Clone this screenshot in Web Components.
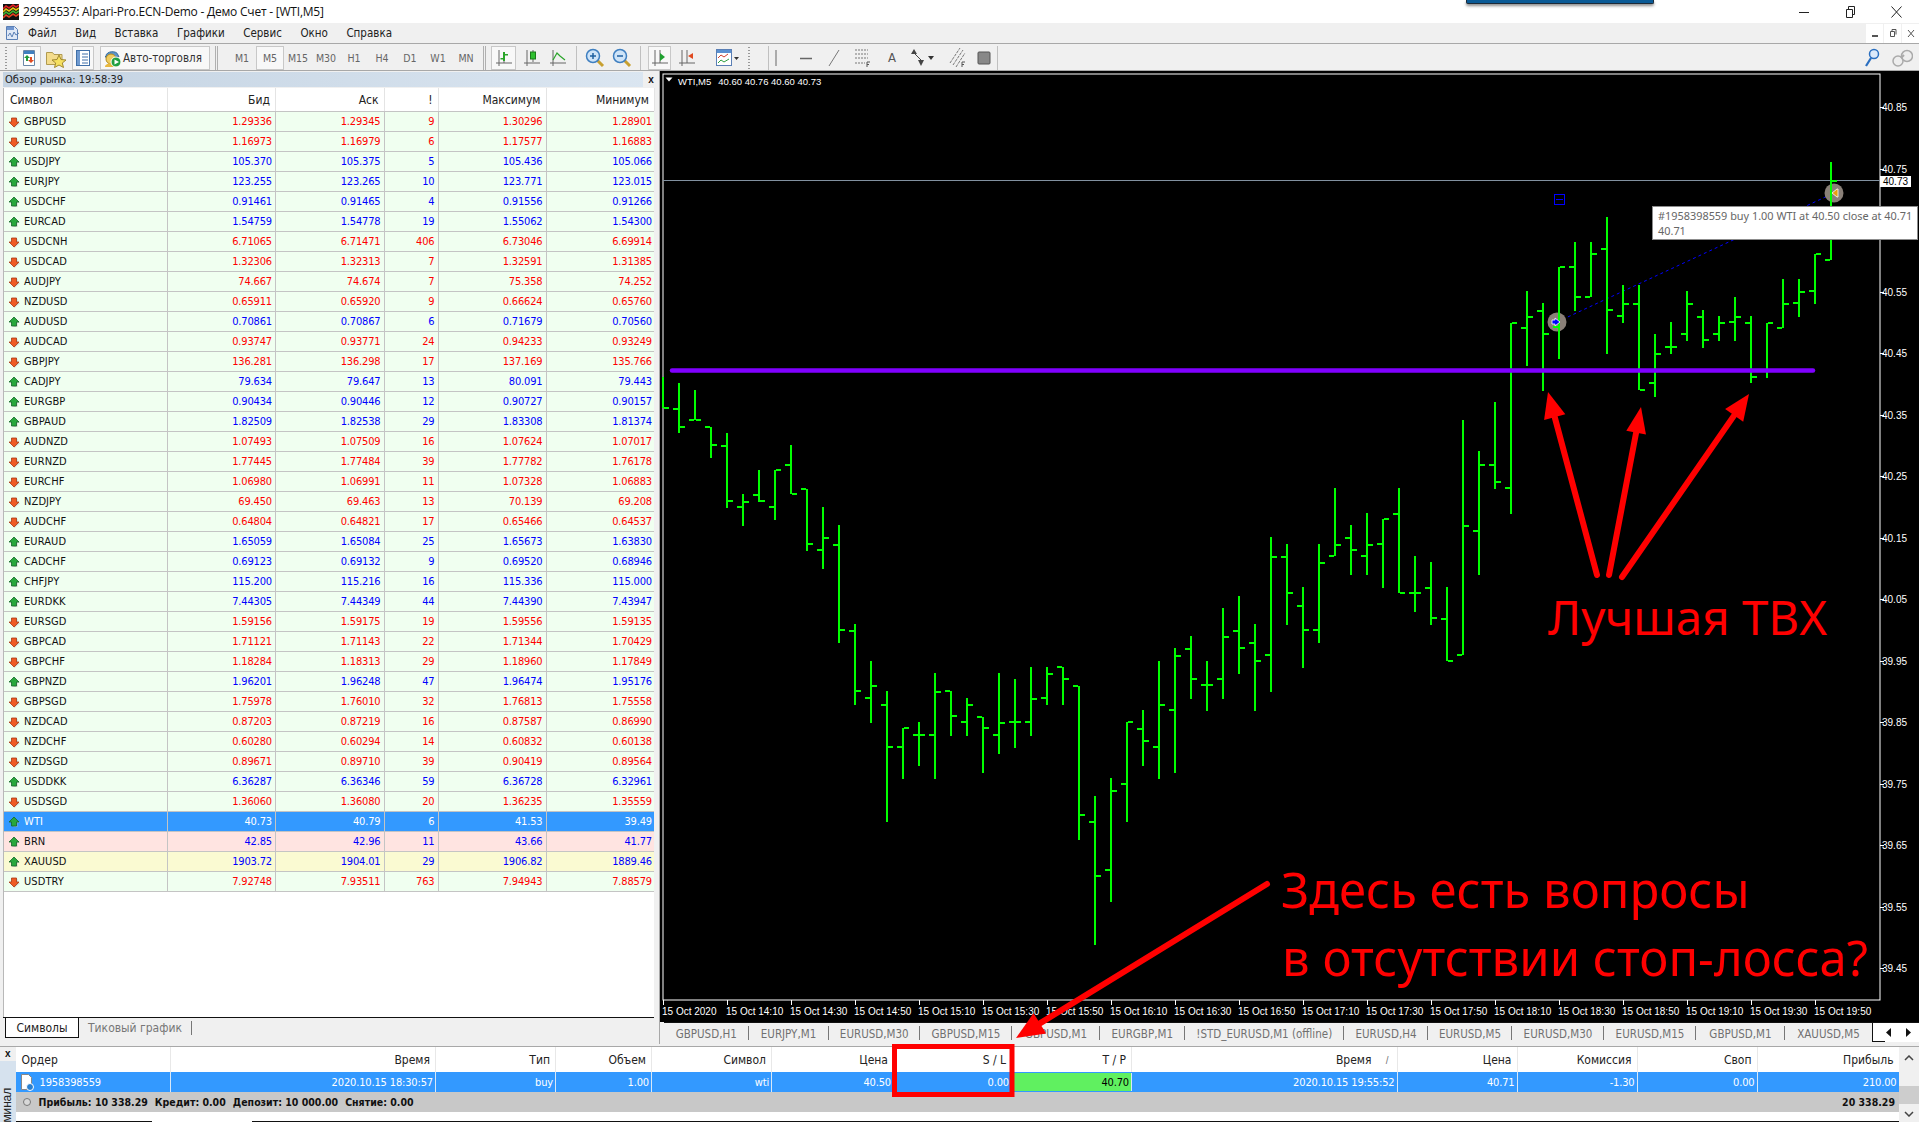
<!DOCTYPE html>
<html lang="ru">
<head>
<meta charset="utf-8">
<title>MetaTrader</title>
<style>
html, body { margin: 0; height: 100%; background: #f0f0f0; overflow: hidden; }
</style>
</head>
<body>
<mt-app></mt-app>
<script>
const UI_FONT = '"DejaVu Sans Condensed", "Liberation Sans", sans-serif';

// small helper, every icon below is a 16x16 or so inline svg
const svg = (w, h, body) => `<svg width="${w}" height="${h}" viewBox="0 0 ${w} ${h}" style="display:block">${body}</svg>`;

const ICONS = {
    logo: svg(16, 16, `<rect width="16" height="16" fill="#111"/><path d="M0 5 3 2 6 4 10 1 13 3 16 1" stroke="#e02020" stroke-width="1.6" fill="none"/><path d="M0 8 3 5 6 7 10 4 13 6 16 4" stroke="#e8c010" stroke-width="1.6" fill="none"/><path d="M0 11 3 8 6 10 10 7 13 9 16 7" stroke="#40b030" stroke-width="1.6" fill="none"/><path d="M0 14 3 11 6 13 10 10 13 12 16 10" stroke="#e04020" stroke-width="1.6" fill="none"/>`),
    doc: svg(16, 16, `<path d="M1.5 1.5h8l3 3v10h-11z" fill="#dfe8f6" stroke="#5a7fb5"/><rect x="2" y="2" width="7" height="3" fill="#6f95cf"/><path d="M3 11 5 8 7 12 9 7 11 10 14 8" stroke="#5a7fb5" fill="none"/>`),
    watch: svg(16, 18, `<path d="M2.5 1.5h11v15h-11z" fill="#fff" stroke="#6a87a8"/><rect x="3" y="2" width="10" height="3" fill="#3f7fc0"/><path d="M6 6 9 9H7v3H5V9H3z" fill="#1f9a3a"/><path d="M10 14 7 11h2V8h2v3h2z" fill="#e04a20"/>`),
    star: svg(22, 20, `<path d="M1.5 4.5h6l1.500 2h8v10h-15.500z" fill="#f4dc8c" stroke="#b09a50"/><path d="M14 7 16 11.500 21 12 17.300 15 18.500 19.500 14 17 9.500 19.500 10.700 15 7 12 12 11.500z" fill="#f6e060" stroke="#a08830"/>`),
    nav: svg(16, 18, `<rect x="1.500" y="1.500" width="13" height="15" fill="#fff" stroke="#3f6fa8"/><rect x="2" y="2" width="3" height="14" fill="#6f9ad0"/><path d="M7 5h6M7 8h6M7 11h6M7 14h6" stroke="#3f6fa8"/>`),
    auto: svg(18, 20, `<path d="M3 8c0-5 11-6 12-1l1 2H2z" fill="#5b94c8" stroke="#386b9a"/><circle cx="8" cy="11" r="5" fill="#f0cc60" stroke="#b08a20"/><path d="M2 19c0-5 12-5 13 0z" fill="#e8b840"/><circle cx="13" cy="14" r="5" fill="#20a040" stroke="#fff"/><path d="M11.500 11.500 16 14 11.500 16.500z" fill="#fff"/>`),
    bars: svg(18, 18, `<path d="M4 1v16M1 14h16M9 14V4" stroke="#666" fill="none"/><path d="M8 3h2v9H8zM10 5h3v1.500h-3zM5.500 9H8v1.500H5.500z" fill="#2aa52a"/>`),
    candle: svg(18, 18, `<path d="M4 1v16M1 14h16M10 1v12" stroke="#666" fill="none"/><rect x="7.500" y="3" width="5" height="7" fill="#30c030" stroke="#1a7a1a"/>`),
    line: svg(18, 18, `<path d="M4 1v16M1 14h16" stroke="#666" fill="none"/><path d="M4 11 8 4 11 7 16 11" stroke="#2aa52a" stroke-width="1.200" fill="none"/>`),
    plus: svg(20, 20, `<path d="M12 12 18 18" stroke="#c8a030" stroke-width="3"/><circle cx="8" cy="8" r="6.500" fill="#cfe4f8" stroke="#3f7fc0" stroke-width="1.500"/><path d="M5 8h6M8 5v6" stroke="#2060a0" stroke-width="1.500"/>`),
    minus: svg(20, 20, `<path d="M12 12 18 18" stroke="#c8a030" stroke-width="3"/><circle cx="8" cy="8" r="6.500" fill="#cfe4f8" stroke="#3f7fc0" stroke-width="1.500"/><path d="M5 8h6" stroke="#2060a0" stroke-width="1.500"/>`),
    scroll: svg(18, 18, `<path d="M4 1v16M1 14h16M9 1v13" stroke="#666" fill="none"/><path d="M9 4 14 8 9 12z" fill="#20a030"/>`),
    shift: svg(18, 18, `<path d="M4 1v16M1 14h16M9 1v13" stroke="#666" fill="none"/><path d="M16 7 11 4v6z" fill="#e04a20" transform="rotate(180 13 7)"/>`),
    tmpl: svg(24, 18, `<rect x=".5" y=".5" width="15" height="16" fill="#fff" stroke="#5a7fb5"/><rect x="1" y="1" width="14" height="3" fill="#5a90d0"/><path d="M2 9 5 6 8 8 12 5" stroke="#d04030" fill="none"/><path d="M2 14 5 11 8 13 13 10" stroke="#30a040" fill="none"/><path d="M18 8h5l-2.500 3z" fill="#333"/>`),
    vline: svg(12, 18, `<path d="M6 1v16" stroke="#666"/>`),
    hline: svg(14, 18, `<path d="M1 9.500h12" stroke="#666" stroke-width="1.500"/>`),
    dline: svg(14, 18, `<path d="M2 17 12 1" stroke="#777"/>`),
    fib: svg(18, 20, `<path d="M1 2h13M1 6h13M1 10h13M1 15h10" stroke="#777" stroke-dasharray="2 1"/><path d="M13 14h3M13 14v5M13 16.500h2" stroke="#555" fill="none"/>`),
    arrows: svg(26, 20, `<path d="M5 1 8 6H2z" fill="#444"/><path d="M6 6 12 12" stroke="#444"/><path d="M12 18 9 12h6z" fill="#444"/><path d="M19 8h6l-3 4z" fill="#333"/>`),
    chan: svg(20, 22, `<path d="M2 16 12 1M5 18 15 3M8 20 17 6" stroke="#777" stroke-dasharray="3 1"/><path d="M14 15h3M14 15v5M14 17.500h2" stroke="#555" fill="none"/>`),
    rect: svg(14, 18, `<rect x="1" y="3" width="12" height="12" rx="1" fill="#888" stroke="#555"/>`),
    find: svg(16, 20, `<circle cx="10" cy="6" r="4.500" fill="#dbe9fa" stroke="#2a6fc0" stroke-width="1.500"/><path d="M7 10 2 18" stroke="#2a6fc0" stroke-width="2.200"/>`),
    bino: svg(22, 22, `<circle cx="7" cy="14" r="5" fill="#eee" stroke="#aaa" stroke-width="1.500"/><circle cx="16" cy="9" r="5.500" fill="#eee" stroke="#aaa" stroke-width="1.500"/><path d="M10 11 13 8" stroke="#aaa" stroke-width="2"/>`),
    up: svg(12, 12, `<path d="M6.500 2 12 7H9.500v4h-4V7H3z" fill="#bbb" opacity=".6"/><path d="M6 1 11 6H8.500v4h-5V6H1z" fill="#27a83c" stroke="#14642a" stroke-width=".8"/>`),
    down: svg(12, 12, `<path d="M6.500 12 12 7H9.500V3h-4v4H3z" fill="#bbb" opacity=".6"/><path d="M6 11 11 6H8.500V2h-5v4H1z" fill="#ef5a24" stroke="#a83a14" stroke-width=".8"/>`),
    order: svg(15, 18, `<path d="M1.500 1.500h7l3 3v12h-10z" fill="#fff" stroke="#888"/><circle cx="10" cy="14" r="3.500" fill="#2a80d0" stroke="#fff"/>`),
    clock: svg(10, 10, `<circle cx="5" cy="5" r="3.500" fill="#d8d8d8" stroke="#777"/>`)
};

class MtTitlebar extends HTMLElement {
    constructor() {
        super();
        this.attachShadow({ mode: 'open' }).innerHTML = `
<style>
:host { display: flex; align-items: center; height: 23px; background: #fff; position: relative; font: 12px "Open Sans", sans-serif; color: #111; }
.logo { margin: 0 4px 0 3px; }
.caption { flex: 1; letter-spacing: -.22px; }
.ctl { display: flex; }
.ctl span { width: 46px; height: 20px; display: flex; align-items: center; justify-content: center; }
.peek { position: absolute; left: 1466px; top: 0; width: 186px; height: 3px; background: #0a5a96; border: 1px solid #1c2a38; border-top: 0; border-radius: 0 0 2px 2px; box-shadow: 0 2px 3px rgba(0,0,0,.45); }
</style>
<span class="logo">${ICONS.logo}</span>
<span class="caption">29945537: Alpari-Pro.ECN-Demo - Демо Счет - [WTI,M5]</span>
<div class="peek"></div>
<div class="ctl">
<span>${svg(10, 10, '<path d="M0 5.500h10" stroke="#222"/>')}</span>
<span>${svg(10, 12, '<path d="M1.500 3.500h6v8h-6zM3.500 3V.5h6v8H8" stroke="#222" fill="none"/>')}</span>
<span>${svg(11, 12, '<path d="M.5.500 10.500 11.500M10.500.500.5 11.500" stroke="#222" fill="none"/>')}</span>
</div>`;
    }
}
customElements.define('mt-titlebar', MtTitlebar);

class MtMenubar extends HTMLElement {
    constructor() {
        super();
        const items = ['Файл', 'Вид', 'Вставка', 'Графики', 'Сервис', 'Окно', 'Справка'];
        this.attachShadow({ mode: 'open' }).innerHTML = `
<style>
:host { display: flex; align-items: center; height: 20px; background: #f0f0f0; font: 11.5px ${UI_FONT}; color: #222; position: relative; }
.app { margin: 0 7px 0 5px; }
nav { display: flex; gap: 18.500px; flex: 1; }
.mdi { display: flex; gap: 1px; margin-right: 0; }
.mdi span { width: 17px; height: 19px; background: #fff; display: flex; align-items: center; justify-content: center; }
</style>
<span class="app">${ICONS.doc}</span>
<nav>${items.map(i => `<span>${i}</span>`).join('')}</nav>
<div class="mdi">
<span>${svg(8, 10, '<path d="M1 8h6" stroke="#555" stroke-width="2"/>')}</span>
<span>${svg(8, 10, '<path d="M1.500 3.500h4v5h-4zM3 3V1.500h4v5" stroke="#555" fill="none"/>')}</span>
<span>${svg(8, 10, '<path d="M1 2 7 9M7 2 1 9" stroke="#555"/>')}</span>
</div>`;
    }
}
customElements.define('mt-menubar', MtMenubar);

class MtToolbar extends HTMLElement {
    constructor() {
        super();
        const frames = ['M1', 'M5', 'M15', 'M30', 'H1', 'H4', 'D1', 'W1', 'MN'];
        const ic = (name, w, cls = '') => `<span class="i ${cls}" style="width:${w}px">${ICONS[name]}</span>`;
        this.attachShadow({ mode: 'open' }).innerHTML = `
<style>
:host { display: flex; align-items: center; height: 25px; padding: 1px 0 0 3px; background: #f0f0f0; border-top: 1px solid #a8a8a8; border-bottom: 1px solid #a8a8a8; font: 11px ${UI_FONT}; color: #555; }
.i { display: flex; align-items: center; justify-content: center; height: 24px; flex: none; box-sizing: border-box; }
.on { background: #f8f8f8; border: 1px solid #c8c8c8; }
.grip { width: 6px; height: 22px; flex: none; background: repeating-linear-gradient(#999 0 1px, transparent 1px 3px) center / 2px 100% no-repeat; }
.sep { width: 1px; height: 24px; background: #b0b0b0; flex: none; box-shadow: 2px 0 0 #b0b0b0; }
.thin { width: 1px; height: 24px; background: #c0c0c0; flex: none; }
.auto { width: 110px; gap: 2px; justify-content: flex-start; padding-left: 2px; color: #333; font-size: 11.500px; }
.tf { width: 28px; text-align: center; flex: none; height: 24px; line-height: 24px; box-sizing: border-box; font-size: 10.500px; color: #666; }
.tf.on { line-height: 22px; }
.right { margin-left: auto; display: flex; gap: 11px; margin-right: 6px; }
</style>
<span class="grip"></span>
<span style="width:7px"></span>${ic('watch', 25, 'on')}
<span style="width:3px"></span>${ic('star', 24)}
<span style="width:4px"></span>${ic('nav', 22, 'on')}
<span style="width:6px"></span><span class="i on auto">${ICONS.auto}<span>Авто-торговля</span></span>
<span style="width:5px"></span><span class="sep"></span>
<span style="width:12px"></span>${frames.map(f => `<span class="tf ${f === 'M5' ? 'on' : ''}">${f}</span>`).join('')}
<span style="width:3px"></span><span class="sep"></span>
<span style="width:7px"></span>${ic('bars', 25, 'on')}
<span style="width:3px"></span>${ic('candle', 26)}${ic('line', 26)}
<span style="width:5px"></span><span class="thin"></span>
<span style="width:4px"></span>${ic('plus', 27)}${ic('minus', 27)}
<span style="width:5px"></span><span class="thin"></span>
<span style="width:7px"></span>${ic('scroll', 23, 'on')}
<span style="width:5px"></span>${ic('shift', 22)}
<span style="width:16px"></span>${ic('tmpl', 27)}
<span style="width:5px"></span><span class="grip"></span>
<span style="width:16px"></span><span class="thin"></span>
<span style="width:0"></span>${ic('vline', 14)}
<span style="width:16px"></span>${ic('hline', 14)}
<span style="width:14px"></span>${ic('dline', 14)}
<span style="width:13px"></span>${ic('fib', 18)}
<span style="width:13px"></span><span class="i" style="width:14px;font-size:13px;color:#555">A</span>
<span style="width:10px"></span>${ic('arrows', 26)}
<span style="width:13px"></span>${ic('chan', 20)}
<span style="width:9px"></span>${ic('rect', 14)}
<span style="width:6px"></span><span class="thin"></span>
<span class="right">${ic('find', 16)}${ic('bino', 22)}</span>`;
    }
}
customElements.define('mt-toolbar', MtToolbar);

class QuoteRow extends HTMLElement {
    static template = document.createElement('template');

    constructor() {
        super();
        this.attachShadow({ mode: 'open' });
        this.shadowRoot.append(QuoteRow.template.content.cloneNode(true));
    }

    connectedCallback() {
        const cells = this.getAttribute('cells').split(' ');
        this.shadowRoot.querySelector('.sym').innerHTML = `<i>${ICONS[this.getAttribute('dir')]}</i>${cells[0]}`;
        cells.slice(1).forEach(v => {
            const td = document.createElement('span');
            td.textContent = v;
            this.shadowRoot.querySelector('.row').append(td);
        });
    }
}

QuoteRow.template.innerHTML = `
<style>
:host { display: block; height: 20px; }
.row { display: grid; grid-template-columns: 164px 108px 108.500px 54px 108px 108.500px; grid-template-rows: 19px; height: 20px; box-sizing: border-box; border-bottom: 1px solid #c4c4c4; line-height: 20px; font-size: 11px; letter-spacing: -.15px; background: var(--row-bg, #f0fff0); color: var(--row-fg, #ff0000); }
span { display: block; text-align: right; padding-right: 3px; border-right: 1px solid #c4c4c4; }
span:last-child { border-right: 0; }
.sym { display: flex; text-align: left; color: var(--sym-fg, #111); padding: 0; letter-spacing: .1px; }
i { width: 12px; margin: 4px 4px 0 4px; display: block; }
</style>
<div class="row"><span class="sym"></span></div>
`;
customElements.define('quote-row', QuoteRow);

class MarketWatch extends HTMLElement {
    constructor() {
        super();
        const quotes = `GBPUSD 1.29336 1.29345 9 1.30296 1.28901 d
EURUSD 1.16973 1.16979 6 1.17577 1.16883 d
USDJPY 105.370 105.375 5 105.436 105.066 u
EURJPY 123.255 123.265 10 123.771 123.015 u
USDCHF 0.91461 0.91465 4 0.91556 0.91266 u
EURCAD 1.54759 1.54778 19 1.55062 1.54300 u
USDCNH 6.71065 6.71471 406 6.73046 6.69914 d
USDCAD 1.32306 1.32313 7 1.32591 1.31385 d
AUDJPY 74.667 74.674 7 75.358 74.252 d
NZDUSD 0.65911 0.65920 9 0.66624 0.65760 d
AUDUSD 0.70861 0.70867 6 0.71679 0.70560 u
AUDCAD 0.93747 0.93771 24 0.94233 0.93249 d
GBPJPY 136.281 136.298 17 137.169 135.766 d
CADJPY 79.634 79.647 13 80.091 79.443 u
EURGBP 0.90434 0.90446 12 0.90727 0.90157 u
GBPAUD 1.82509 1.82538 29 1.83308 1.81374 u
AUDNZD 1.07493 1.07509 16 1.07624 1.07017 d
EURNZD 1.77445 1.77484 39 1.77782 1.76178 d
EURCHF 1.06980 1.06991 11 1.07328 1.06883 d
NZDJPY 69.450 69.463 13 70.139 69.208 d
AUDCHF 0.64804 0.64821 17 0.65466 0.64537 d
EURAUD 1.65059 1.65084 25 1.65673 1.63830 u
CADCHF 0.69123 0.69132 9 0.69520 0.68946 u
CHFJPY 115.200 115.216 16 115.336 115.000 u
EURDKK 7.44305 7.44349 44 7.44390 7.43947 u
EURSGD 1.59156 1.59175 19 1.59556 1.59135 d
GBPCAD 1.71121 1.71143 22 1.71344 1.70429 d
GBPCHF 1.18284 1.18313 29 1.18960 1.17849 d
GBPNZD 1.96201 1.96248 47 1.96474 1.95176 u
GBPSGD 1.75978 1.76010 32 1.76813 1.75558 d
NZDCAD 0.87203 0.87219 16 0.87587 0.86990 d
NZDCHF 0.60280 0.60294 14 0.60832 0.60138 d
NZDSGD 0.89671 0.89710 39 0.90419 0.89564 d
USDDKK 6.36287 6.36346 59 6.36728 6.32961 u
USDSGD 1.36060 1.36080 20 1.36235 1.35559 d
WTI 40.73 40.79 6 41.53 39.49 u
BRN 42.85 42.96 11 43.66 41.77 u
XAUUSD 1903.72 1904.01 29 1906.82 1889.46 u
USDTRY 7.92748 7.93511 763 7.94943 7.88579 d`.split('\n');
        const rows = quotes.map(line => {
            const parts = line.split(' ');
            const dir = parts.pop() === 'u' ? 'up' : 'down';
            const fg = dir === 'up' ? '#0000ff' : '#ff0000';
            let style = `--row-fg:${fg}`;
            if (parts[0] === 'WTI') style = '--row-bg:#3399ff;--row-fg:#fff;--sym-fg:#fff';
            if (parts[0] === 'BRN') style += ';--row-bg:#ffe4e1';
            if (parts[0] === 'XAUUSD') style += ';--row-bg:#fafad2';
            return `<quote-row dir="${dir}" cells="${parts.join(' ')}" style="${style}"></quote-row>`;
        }).join('');
        this.attachShadow({ mode: 'open' }).innerHTML = `
<style>
:host { display: flex; flex-direction: column; width: 660px; box-sizing: border-box; padding: 1px 5px 2px 3px; background: #f0f0f0; border-right: 1px solid #a8a8a8; font: 11px ${UI_FONT}; }
.cap { height: 15px; line-height: 15px; background: linear-gradient(90deg, #c4d3e2, #dbe6f1); display: flex; justify-content: space-between; padding-left: 2px; margin-bottom: 1px; color: #222; margin-right: -5px; }
.cap b { width: 16px; text-align: center; background: #f0f0f0; font: bold 10px "Liberation Sans", sans-serif; line-height: 15px; color: #111; }
.grid { flex: 1; background: #fff; display: flex; flex-direction: column; border-left: 1px solid #b8b8b8; box-sizing: border-box; }
.head { display: grid; grid-template-columns: 164px 108px 108.500px 54px 108px 108.500px; grid-template-rows: 23px; height: 24px; line-height: 25px; box-sizing: border-box; border-bottom: 1px solid #c4c4c4; color: #222; font-size: 12px; }
.head span { text-align: right; padding-right: 5px; border-right: 1px solid #e4e4e4; }
.head span:first-child { text-align: left; padding-left: 6px; }
.rows { flex: 1; }
.tabs { height: 21px; display: flex; align-items: flex-start; border-top: 1px solid #111; background: #f0f0f0; color: #777; margin-left: -1px; padding-left: 2px; position: relative; font-size: 12px; line-height: 21px; }
.tabs .on { width: 72px; height: 19px; box-sizing: content-box; text-align: center; background: #fff; color: #222; border: 1px solid #111; border-top: 0; }
.tabs .off { margin-left: 9px; height: 19px; padding-right: 10px; background: linear-gradient(#777,#777) right center / 1px 14px no-repeat; }
.pad { height: 3px; }
</style>
<div class="cap"><span>Обзор рынка: 19:58:39</span><b>x</b></div>
<div class="grid">
<div class="head"><span>Символ</span><span>Бид</span><span>Аск</span><span>!</span><span>Максимум</span><span>Минимум</span></div>
<div class="rows">${rows}</div>
<div class="tabs"><span class="on">Символы</span><span class="off">Тиковый график</span></div>
</div>
<div class="pad"></div>`;
    }
}
customElements.define('market-watch', MarketWatch);

class BarChart extends HTMLElement {
    constructor() {
        super();
        // high, low, open, close in screen px, read off the reference
        const bars = [[377,408,0,408],[383,433,409,427],[390,420,420,420],[427,458,427,445],[433,508,446,501],[494,526,507,502],[470,502,495,501],[470,520,507,470],[445,494,465,494],[489,551,489,544],[507,569,550,538],[525,643,545,630],[624,705,631,691],[661,723,698,686],[691,822,705,747],[728,779,747,728],[722,766,735,735],[673,779,735,692],[691,736,691,716],[698,736,722,705],[717,773,717,728],[673,754,735,723],[679,748,722,722],[667,736,722,699],[667,705,698,674],[667,705,667,679],[686,840,686,815],[796,945,822,876],[778,902,870,791],[722,822,784,722],[710,766,729,741],[661,779,747,705],[648,773,710,656],[636,699,649,679],[661,711,685,685],[608,699,679,637],[596,674,631,648],[624,711,643,661],[537,692,655,557],[544,625,557,593],[587,668,606,630],[544,643,630,563],[488,556,556,545],[525,575,538,550],[513,575,556,545],[519,588,544,519],[488,593,514,593],[556,612,593,593],[562,625,588,618],[587,661,619,661],[420,655,655,526],[451,575,531,465],[402,489,465,482],[323,514,488,323],[291,366,328,317],[303,391,311,334],[267,359,327,267],[242,311,267,297],[242,297,297,254],[217,354,249,310],[285,323,316,304],[285,390,304,390],[334,397,383,354],[322,354,347,347],[291,341,334,304],[310,348,317,340],[316,341,334,323],[297,341,322,317],[316,383,323,377],[323,378,0,323],[279,328,328,304],[279,317,303,292],[254,304,291,254],[162,260,260,181]];
        // the svg uses page coordinates shifted by the pane origin
        const ox = 660, oy = 71;
        let d = '';
        bars.forEach(([h, l, o, c], i) => {
            const x = 662 + 16 * i - ox;
            d += `M${x} ${h - oy}h2V${l - oy}h-2z`;
            if (o) d += `M${x - 5} ${o - 1 - oy}h5v2h-5z`;
            d += `M${x + 2} ${c - 1 - oy}h5v2h-5z`;
        });
        const prices = ['40.85','40.75','40.65','40.55','40.45','40.35','40.25','40.15','40.05','39.95','39.85','39.75','39.65','39.55','39.45'];
        const yOf = n => 107 + n * 61.500 - oy;
        const priceTicks = prices.map((p, n) => `<path d="M1220 ${Math.round(yOf(n))}.5h4" stroke="#fff"/>`).join('');
        const priceText = prices.map((p, n) => `<span class="p" style="top:${yOf(n) - 6}px">${p}</span>`).join('');
        const times = ['15 Oct 2020','15 Oct 14:10','15 Oct 14:30','15 Oct 14:50','15 Oct 15:10','15 Oct 15:30','15 Oct 15:50','15 Oct 16:10','15 Oct 16:30','15 Oct 16:50','15 Oct 17:10','15 Oct 17:30','15 Oct 17:50','15 Oct 18:10','15 Oct 18:30','15 Oct 18:50','15 Oct 19:10','15 Oct 19:30','15 Oct 19:50'];
        const timeTicks = times.map((t, n) => `<path d="M${3 + 64 * n}.5 929v5" stroke="#fff"/>`).join('');
        const timeText = times.map((t, n) => `<span class="t" style="left:${2 + 64 * n}px">${t}</span>`).join('');
        this.attachShadow({ mode: 'open' }).innerHTML = `
<style>
:host { display: block; position: relative; height: 951px; background: #000; overflow: hidden; font: 10px "Liberation Sans", sans-serif; color: #fff; }
svg { position: absolute; left: 0; top: 0; }
.p { position: absolute; left: 1222px; line-height: 14px; }
.t { position: absolute; top: 934px; line-height: 14px; white-space: nowrap; }
.head { position: absolute; left: 18px; top: 4px; line-height: 14px; white-space: nowrap; font-size: 9.500px; }
.head b { font-weight: normal; margin-right: 7px; }
.last { position: absolute; left: 1220px; top: 105px; width: 31px; height: 11px; line-height: 11px; background: #fff; color: #000; text-align: center; }
.tip { position: absolute; left: 992px; top: 135px; width: 259px; height: 31px; background: #fff; border: 1px solid #8c8c8c; color: #666; font: 10.900px/15px "Noto Sans", sans-serif; padding: 1px 0 0 5px; white-space: nowrap; }
</style>
<svg width="1259" height="951">
<rect x="3" y="3" width="1217" height="926" fill="none" stroke="#fff"/>
<path d="M5.500 6.500h7l-3.500 4z" fill="#fff"/>
<path d="M3 109.500H1220" stroke="#8291a0"/>
${priceTicks}${timeTicks}
<path d="M897 251 1174 122" stroke="#0000ff" stroke-dasharray="3 3"/>
<circle cx="897" cy="251" r="9.500" fill="#8a8078"/>
<circle cx="1174" cy="122" r="9.500" fill="#8a8078"/>
<path d="${d}" fill="#00ff00"/>
<rect x="894.500" y="123.500" width="10" height="10" fill="none" stroke="#0000ff"/>
<path d="M896 128.500h7" stroke="#0000ff"/>
<path d="M12 299.500H1153" stroke="#8000ff" stroke-width="4.500" stroke-linecap="round"/>
<path d="M892 249h3v-2l5 4-5 4v-2h-3z" fill="#0000ff" stroke="#fff" stroke-width=".8"/>
<path d="M1178 118v8h-1l-5-4 5-4z" fill="#e8a010" stroke="#fff" stroke-width=".8"/>
</svg>
<div class="head"><b>WTI,M5</b>40.60 40.76 40.60 40.73</div>
${priceText}${timeText}
<span class="last">40.73</span>
<div class="tip">#1958398559 buy 1.00 WTI at 40.50 close at 40.71<br>40.71</div>`;
    }
}
customElements.define('bar-chart', BarChart);

class ChartTabs extends HTMLElement {
    constructor() {
        super();
        const tabs = [['GBPUSD,H1',84.500],['EURJPY,M1',80],['EURUSD,M30',91.500],['GBPUSD,M15',92],['GBPUSD,M1',88],['EURGBP,M1',84.500],['!STD_EURUSD,M1 (offline)',159.500],['EURUSD,H4',84],['EURUSD,M5',84],['EURUSD,M30',92],['EURUSD,M15',92],['GBPUSD,M1',89],['XAUUSD,M5',87]];
        this.attachShadow({ mode: 'open' }).innerHTML = `
<style>
:host { display: flex; height: 22px; background: #f0f0f0; font: 11.500px ${UI_FONT}; color: #707070; padding-left: 4px; position: relative; }
.strip { display: flex; border-top: 1px solid #111; flex: none; height: 19px; }
.strip span { display: flex; align-items: center; justify-content: center; padding-top: 2px; background: linear-gradient(#777,#777) right center / 1px 14px no-repeat; white-space: nowrap; box-sizing: border-box; }
.strip span:last-child { background: none; }
.nav { flex: 1; background: #fff; display: flex; align-items: center; gap: 13px; padding-left: 14px; height: 19px; border-top: 1px solid #111; box-sizing: content-box; position: relative; }
.nav::before { content: ""; position: absolute; left: 0; top: 0; width: 12px; height: 18px; border-left: 1px solid #111; border-bottom: 1px solid #111; }
.nav svg { flex: none; }
</style>
<div class="strip">${tabs.map(t => `<span style="width:${t[1]}px">${t[0]}</span>`).join('')}</div>
<div class="nav">${svg(6, 9, '<path d="M5 0v9L0 4.500z" fill="#111"/>')}${svg(6, 9, '<path d="M1 0v9l5-4.500z" fill="#111"/>')}</div>`;
    }
}
customElements.define('chart-tabs', ChartTabs);

class TerminalPanel extends HTMLElement {
    constructor() {
        super();
        const cols = '155.500px 265px 120px 96px 120px 122px 118px 120px 265.500px 120px 120px 120px 142px';
        const head = ['Ордер', 'Время', 'Тип', 'Объем', 'Символ', 'Цена', 'S / L', 'T / P', 'Время<em>/</em>', 'Цена', 'Комиссия', 'Своп', 'Прибыль'];
        const row = ['1958398559', '2020.10.15 18:30:57', 'buy', '1.00', 'wti', '40.50', '0.00', '40.70', '2020.10.15 19:55:52', '40.71', '-1.30', '0.00', '210.00'];
        this.attachShadow({ mode: 'open' }).innerHTML = `
<style>
:host { display: flex; height: 78px; box-sizing: border-box; padding-top: 2px; background: #f0f0f0; font: 11px ${UI_FONT}; letter-spacing: -.15px; color: #222; position: relative; overflow: hidden; }
.side { width: 15.500px; flex: none; position: relative; overflow: hidden; border-top: 1px solid #a8a8a8; }
.side b { display: block; text-align: center; font: bold 10px/14px "Liberation Sans", sans-serif; height: 14px; color: #111; }
.side div { position: absolute; left: 0; right: 0; top: 14px; bottom: 0; background: #d6e2ee; overflow: hidden; }
.side span { position: absolute; left: 1px; bottom: -20px; writing-mode: vertical-rl; transform: rotate(180deg); font: 12px/13px "Liberation Sans", sans-serif; color: #222; }
.body { flex: 1; display: flex; flex-direction: column; background: #fff; border-top: 1px solid #a8a8a8; min-width: 0; }
.cells { display: grid; grid-template-columns: ${cols}; }
.head { height: 25px; grid-template-rows: 25px; line-height: 27px; font-size: 12px; letter-spacing: 0; }
.head span { text-align: right; padding-right: 5px; border-right: 1px solid #e8e8e8; position: relative; }
.head span:first-child { text-align: left; padding-left: 6px; }
.head span:nth-child(9) { padding-right: 25px; }
em { position: absolute; right: 8px; font: 10px/27px "Liberation Sans", sans-serif; color: #777; }
.row { height: 20px; grid-template-rows: 20px; line-height: 21px; background: #3399ff; color: #fff; }
.row span { text-align: right; padding-right: 2px; border-right: 1px solid #d8e8f8; display: block; }
.row span:first-child { text-align: left; display: flex; padding: 0; }
.row i { width: 15px; margin: 1px 5px 0 4px; display: block; }
.row .tp { background: #60f060; color: #000; margin: 1px 0; line-height: 19px; }
.sum { height: 20px; line-height: 21px; background: #c8c8c8; display: flex; justify-content: space-between; font-weight: bold; color: #111; padding-right: 4px; font-size: 10.500px; letter-spacing: 0; }
.sum i { display: inline-block; margin: 0 7px 0 6px; vertical-align: -1px; }
.sum span span { margin-right: 7px; }
.foot { flex: 1; position: relative; }
.line { position: absolute; left: 0; right: 0; bottom: 0; height: 1px; background: linear-gradient(90deg, #111 136px, transparent 136px 236px, #111 236px); }
.bar { width: 20px; flex: none; background: #f0f0f0; border-top: 1px solid #a8a8a8; position: relative; display: flex; flex-direction: column; align-items: center; justify-content: space-between; padding: 8px 0 5px; box-sizing: border-box; }
.thumb { position: absolute; left: 0; right: 0; top: 39px; height: 18px; background: #cdcdcd; }
</style>
<div class="side"><b>x</b><div><span>Терминал</span></div></div>
<div class="body">
<div class="cells head">${head.map(h => `<span>${h}</span>`).join('')}</div>
<div class="cells row">${row.map((v, n) => n === 0 ? `<span><i>${ICONS.order}</i>${v}</span>` : `<span class="${n === 7 ? 'tp' : ''}">${v}</span>`).join('')}</div>
<div class="sum"><span><i>${ICONS.clock}</i><span>Прибыль: 10 338.29</span><span>Кредит: 0.00</span><span>Депозит: 10 000.00</span><span>Снятие: 0.00</span></span><span>20 338.29</span></div>
<div class="foot"><div class="line"></div></div>
</div>
<div class="bar">${svg(10, 6, '<path d="M1 5 5 1 9 5" stroke="#444" stroke-width="1.500" fill="none"/>')}<div class="thumb"></div>${svg(10, 6, '<path d="M1 1 5 5 9 1" stroke="#444" stroke-width="1.500" fill="none"/>')}</div>`;
    }
}
customElements.define('terminal-panel', TerminalPanel);

// the red marks somebody painted on the screenshot
class ChartNotes extends HTMLElement {
    constructor() {
        super();
        const arrow = (x1, y1, x2, y2, w, len, half) => {
            const a = Math.atan2(y2 - y1, x2 - x1), cs = Math.cos(a), sn = Math.sin(a);
            const bx = x2 - cs * len, by = y2 - sn * len;
            return `<path d="M${x1} ${y1}L${bx} ${by}" stroke="#ff0000" stroke-width="${w}" stroke-linecap="round"/>` +
                `<path d="M${x2} ${y2}L${bx - sn * half} ${by + cs * half}L${bx + sn * half} ${by - cs * half}z" fill="#ff0000"/>`;
        };
        this.attachShadow({ mode: 'open' }).innerHTML = `
<style>
:host { display: block; position: absolute; left: 0; top: 0; width: 1919px; height: 1122px; pointer-events: none; font: 49px "Noto Sans", sans-serif; color: #ff0000; }
svg { position: absolute; left: 0; top: 0; }
span { position: absolute; white-space: nowrap; line-height: 60px; }
</style>
<svg width="1919" height="1122">
${arrow(1597, 575, 1548, 392, 6, 26, 11)}
${arrow(1609, 575, 1641, 407, 6, 26, 10)}
${arrow(1622, 577, 1749, 394, 6, 26, 11)}
${arrow(1267, 884, 1016, 1038, 6, 28, 12)}
<rect x="894.500" y="1046.500" width="117.500" height="48" fill="none" stroke="#ff0000" stroke-width="5"/>
</svg>
<span style="left:1548px;top:587px;font-size:47.500px">Лучшая ТВХ</span>
<span style="left:1281px;top:859px">Здесь есть вопросы</span>
<span style="left:1282px;top:927px">в отсутствии стоп-лосса?</span>`;
    }
}
customElements.define('chart-notes', ChartNotes);

class MtApp extends HTMLElement {
    constructor() {
        super();
        this.attachShadow({ mode: 'open' }).innerHTML = `
<style>
:host { display: flex; flex-direction: column; width: 1919px; height: 1122px; position: relative; overflow: hidden; }
.main { display: flex; height: 973px; }
.right { flex: 1; display: flex; flex-direction: column; min-width: 0; }
</style>
<mt-titlebar></mt-titlebar>
<mt-menubar></mt-menubar>
<mt-toolbar></mt-toolbar>
<div class="main">
<market-watch></market-watch>
<div class="right"><bar-chart></bar-chart><chart-tabs></chart-tabs></div>
</div>
<terminal-panel></terminal-panel>
<chart-notes></chart-notes>`;
    }
}
customElements.define('mt-app', MtApp);
</script>
</body>
</html>
